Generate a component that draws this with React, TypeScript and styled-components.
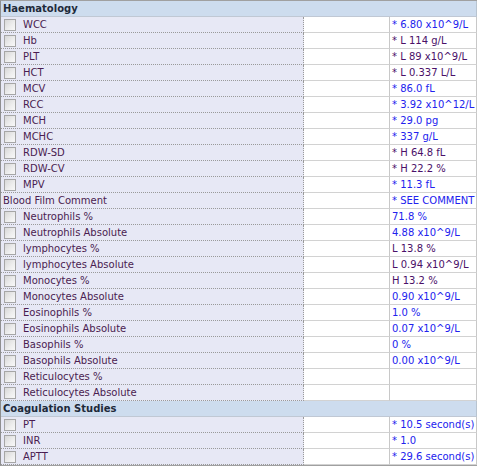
import React from "react";
import styled, { createGlobalStyle } from "styled-components";

const Global = createGlobalStyle`
  html, body { margin: 0; padding: 0; background: #ffffff; }
  body { font-family: "DejaVu Sans", "Liberation Sans", sans-serif; font-size: 10px; }
`;

type Row =
  | { kind: "header"; label: string }
  | { kind: "item"; label: string; value?: string; flag?: boolean; check?: boolean };

const rows: Row[] = [
  { kind: "header", label: "Haematology" },
  { kind: "item", label: "WCC", value: "* 6.80 x10^9/L" },
  { kind: "item", label: "Hb", value: "* L 114 g/L", flag: true },
  { kind: "item", label: "PLT", value: "* L 89 x10^9/L", flag: true },
  { kind: "item", label: "HCT", value: "* L 0.337 L/L", flag: true },
  { kind: "item", label: "MCV", value: "* 86.0 fL" },
  { kind: "item", label: "RCC", value: "* 3.92 x10^12/L" },
  { kind: "item", label: "MCH", value: "* 29.0 pg" },
  { kind: "item", label: "MCHC", value: "* 337 g/L" },
  { kind: "item", label: "RDW-SD", value: "* H 64.8 fL", flag: true },
  { kind: "item", label: "RDW-CV", value: "* H 22.2 %", flag: true },
  { kind: "item", label: "MPV", value: "* 11.3 fL" },
  { kind: "item", label: "Blood Film Comment", value: "* SEE COMMENT", check: false },
  { kind: "item", label: "Neutrophils %", value: "71.8 %" },
  { kind: "item", label: "Neutrophils Absolute", value: "4.88 x10^9/L" },
  { kind: "item", label: "lymphocytes %", value: "L 13.8 %", flag: true },
  { kind: "item", label: "lymphocytes Absolute", value: "L 0.94 x10^9/L", flag: true },
  { kind: "item", label: "Monocytes %", value: "H 13.2 %", flag: true },
  { kind: "item", label: "Monocytes Absolute", value: "0.90 x10^9/L" },
  { kind: "item", label: "Eosinophils %", value: "1.0 %" },
  { kind: "item", label: "Eosinophils Absolute", value: "0.07 x10^9/L" },
  { kind: "item", label: "Basophils %", value: "0 %" },
  { kind: "item", label: "Basophils Absolute", value: "0.00 x10^9/L" },
  { kind: "item", label: "Reticulocytes %" },
  { kind: "item", label: "Reticulocytes Absolute" },
  { kind: "header", label: "Coagulation Studies" },
  { kind: "item", label: "PT", value: "* 10.5 second(s)" },
  { kind: "item", label: "INR", value: "* 1.0" },
  { kind: "item", label: "APTT", value: "* 29.6 second(s)" },
];

const Grid = styled.div`
  display: grid;
  grid-template-columns: 303px 86px 87px;
  width: 476px;
  border-left: 1px solid #8f8f8f;
  border-top: 1px solid #a0a0a0;
  border-bottom: 1px solid #a0a0a0;
`;

const HeaderCell = styled.div`
  grid-column: 1 / -1;
  height: 15px;
  display: flex;
  align-items: center;
  padding-left: 2px;
  background: #cddcee;
  border-bottom: 1px solid #c0c8d4;
  border-right: 1px solid #b8c4d0;
  font-weight: bold;
  color: #1e2a3a;
  white-space: nowrap;
`;

const LabelCell = styled.div`
  height: 15px;
  display: flex;
  align-items: center;
  gap: 7px;
  padding-left: 3px;
  background: #e7e8f5;
  border-bottom: 1px dotted #9a9a9a;
  border-right: 1px dotted #9a9a9a;
  color: #4a1c50;
  white-space: nowrap;
  overflow: hidden;
`;

const ValueCell = styled.div<{ $flag?: boolean }>`
  height: 15px;
  display: flex;
  align-items: center;
  padding-left: 2px;
  background: #ffffff;
  border-bottom: 1px solid #d2d2d2;
  border-right: 1px solid #c8c8c8;
  color: ${(p) => (p.$flag ? "#4a1068" : "#2222ee")};
  white-space: nowrap;
  overflow: hidden;
`;

const Box = styled.span`
  box-sizing: border-box;
  width: 12px;
  height: 12px;
  flex: none;
  border: 1px solid #a6a6a6;
  background: linear-gradient(135deg, #d8d8d8 0%, #eeeeee 60%, #f8f8f8 100%);
`;

const Plain = styled.span<{ $shift?: boolean }>`
  margin-left: ${(p) => (p.$shift ? "-1px" : "0")};
`;

export default function App() {
  return (
    <>
      <Global />
      <Grid>
        {rows.map((r, i) =>
          r.kind === "header" ? (
            <HeaderCell key={i}>{r.label}</HeaderCell>
          ) : (
            <React.Fragment key={i}>
              <LabelCell>
                {r.check === false ? null : <Box />}
                <Plain $shift={r.check === false}>{r.label}</Plain>
              </LabelCell>
              <ValueCell />
              <ValueCell $flag={r.flag}>{r.value}</ValueCell>
            </React.Fragment>
          )
        )}
      </Grid>
    </>
  );
}
